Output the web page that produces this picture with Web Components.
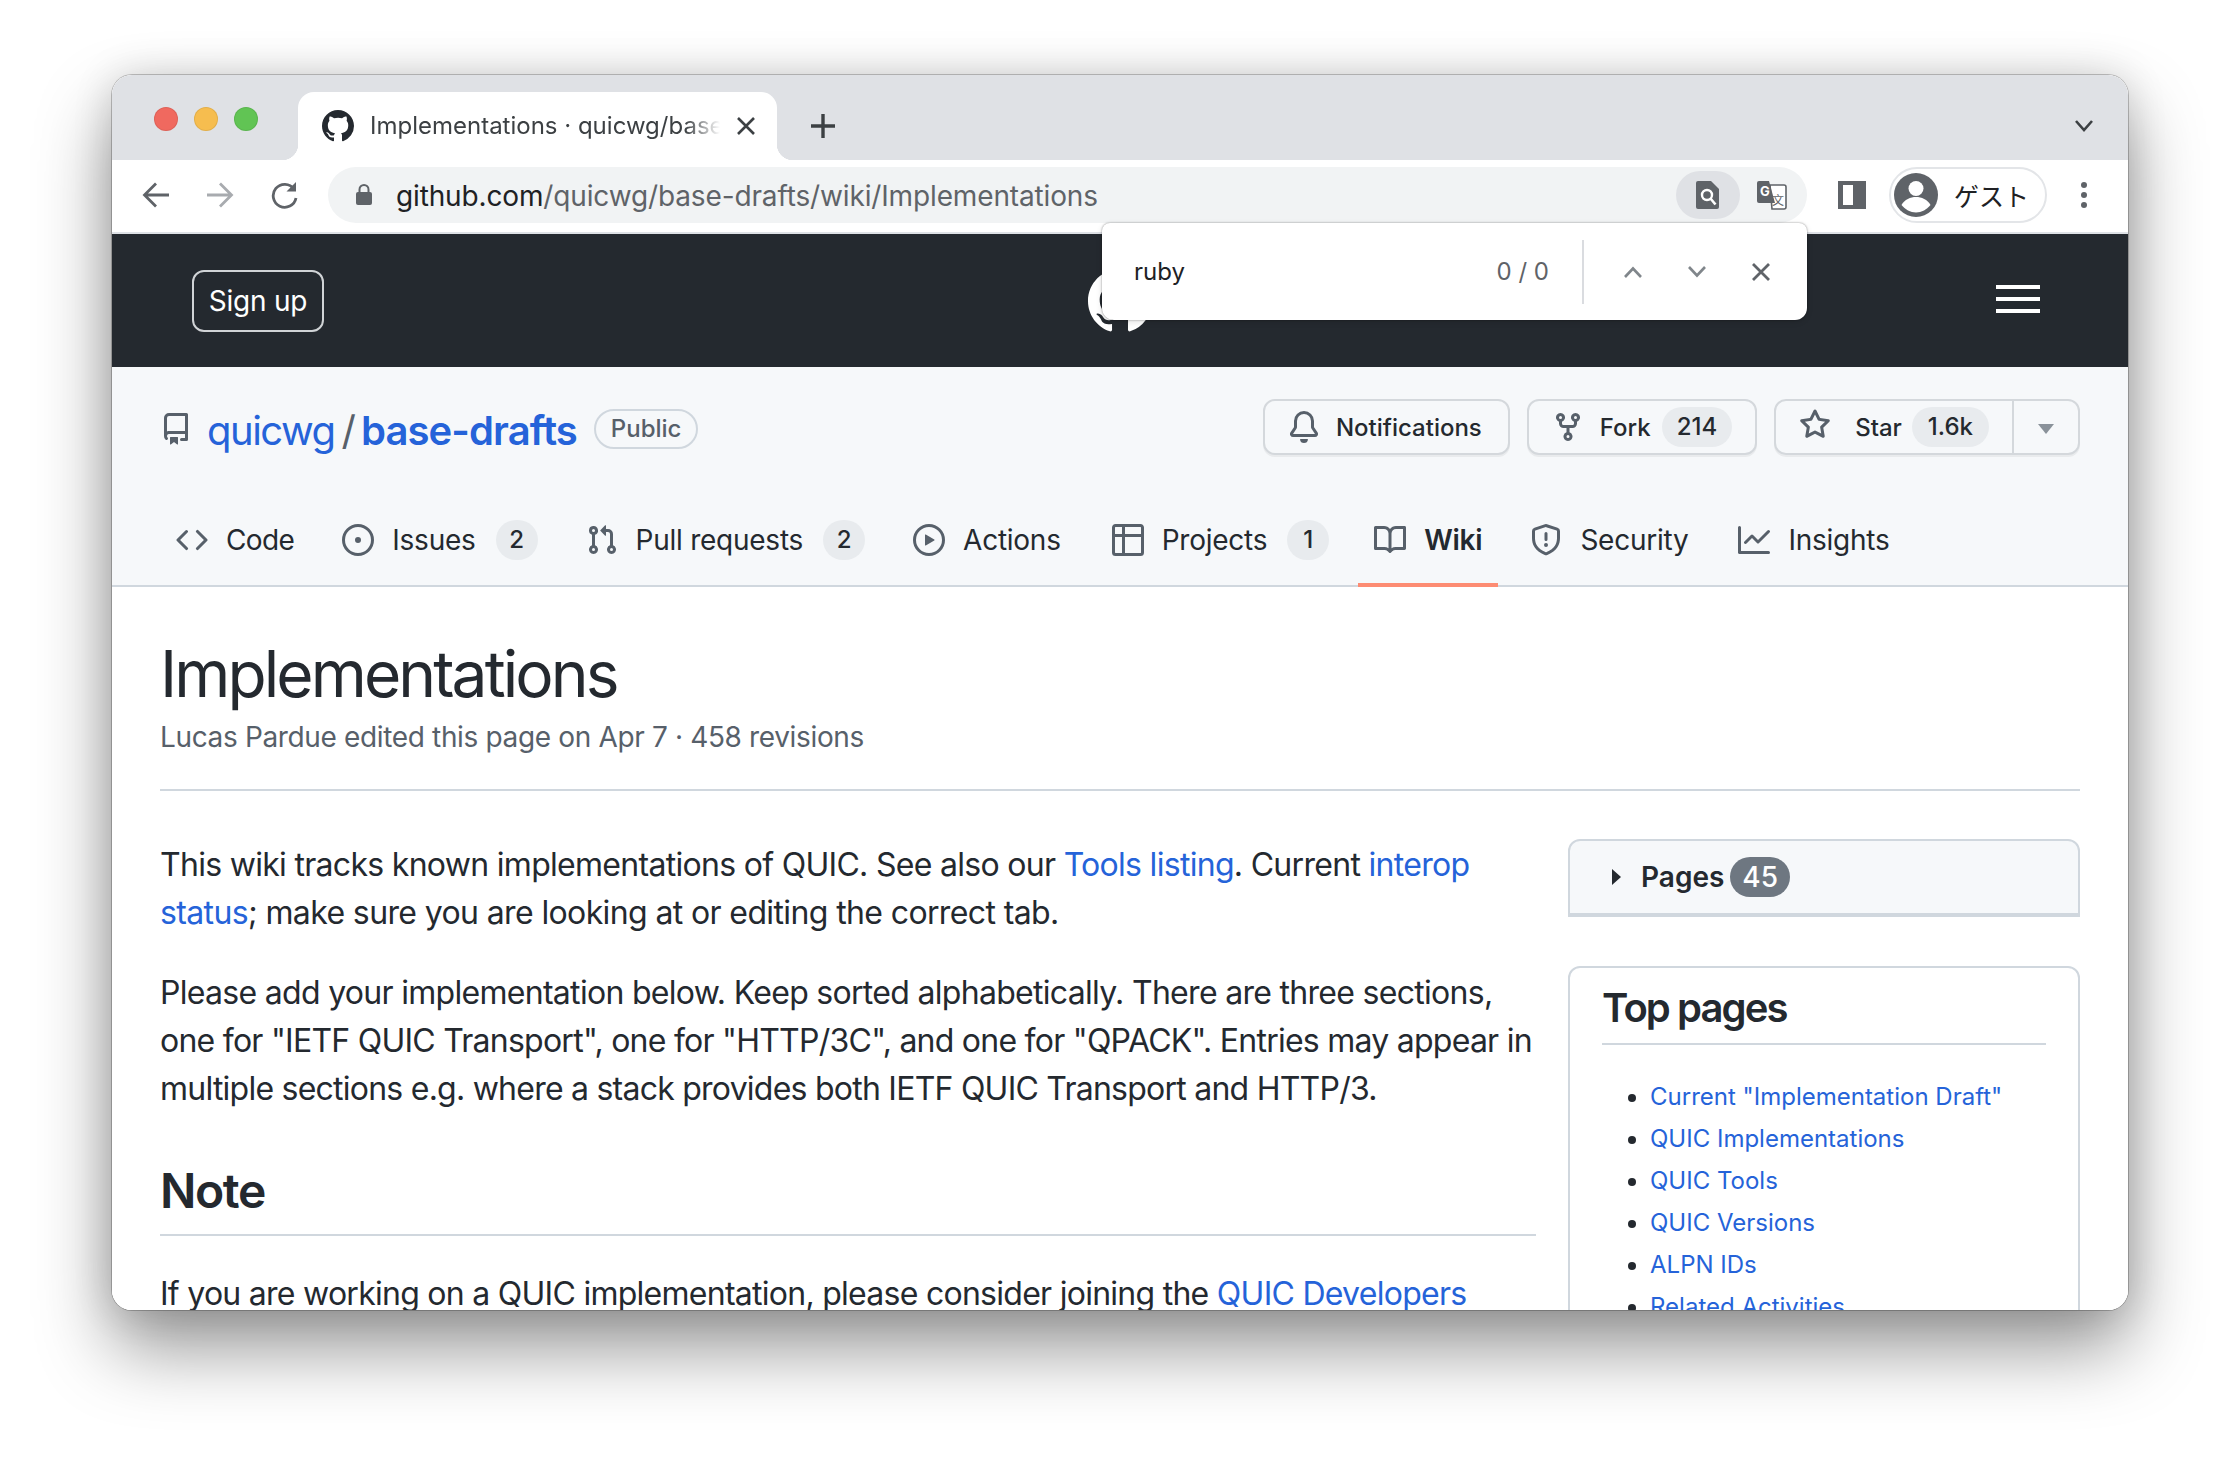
<!DOCTYPE html>
<html lang="en">
<head>
<meta charset="utf-8">
<title>Implementations · quicwg/base-drafts Wiki</title>
<style>
  html, body { margin: 0; background: #fff; }
  body { padding: 75px 112px 0; height: 1383px; overflow: hidden; font-family: Inter, "Noto Sans CJK JP", sans-serif; color: #24292f; }
  a { color: inherit; text-decoration: none; }
</style>
</head>
<body>
<browser-window>
  <tab-strip slot="chrome"></tab-strip>
  <browser-toolbar slot="chrome"></browser-toolbar>
  <find-bar slot="overlay" query="ruby" count="0 / 0"></find-bar>
  <site-header></site-header>
  <repo-head>
    <repo-title slot="title"></repo-title>
    <gh-button slot="actions" icon="bell">Notifications</gh-button>
    <gh-button slot="actions" icon="fork" count="214">Fork</gh-button>
    <gh-button slot="actions" icon="star" count="1.6k" caret>Star</gh-button>
    <nav-item slot="nav" icon="code" style="letter-spacing:-.6px">Code</nav-item>
    <nav-item slot="nav" icon="issue" count="2">Issues</nav-item>
    <nav-item slot="nav" icon="pr" count="2">Pull requests</nav-item>
    <nav-item slot="nav" icon="play" style="margin-right:3px">Actions</nav-item>
    <nav-item slot="nav" icon="table" count="1" style="margin-right:-3px">Projects</nav-item>
    <nav-item slot="nav" icon="book" active>Wiki</nav-item>
    <nav-item slot="nav" icon="shield">Security</nav-item>
    <nav-item slot="nav" icon="graph" style="margin-left:2px">Insights</nav-item>
  </repo-head>
  <wiki-page>
    <span slot="title">Implementations</span>
    <span slot="meta">Lucas Pardue edited this page on Apr 7 · 458 revisions</span>
    <wiki-body slot="body"></wiki-body>
    <pages-box slot="side" count="45"></pages-box>
    <top-pages slot="side"></top-pages>
  </wiki-page>
</browser-window>

<script>
const ICONS = {
  repo: 'M2 2.5A2.5 2.5 0 014.5 0h8.75a.75.75 0 01.75.75v12.5a.75.75 0 01-.75.75h-2.5a.75.75 0 110-1.5h1.75v-2h-8a1 1 0 00-.714 1.7.75.75 0 01-1.072 1.05A2.495 2.495 0 012 11.5v-9zm10.5-1V9h-8c-.356 0-.694.074-1 .208V2.5a1 1 0 011-1h8zM5 12.25v3.25a.25.25 0 00.4.2l1.45-1.087a.25.25 0 01.3 0L8.6 15.7a.25.25 0 00.4-.2v-3.25a.25.25 0 00-.25-.25h-3.5a.25.25 0 00-.25.25z',
  bell: 'M8 16a2 2 0 001.985-1.75c.017-.137-.097-.25-.235-.25h-3.5c-.138 0-.252.113-.235.25A2 2 0 008 16z M3 5a5 5 0 0110 0v2.947c0 .05.015.098.042.139l1.703 2.555A1.518 1.518 0 0113.482 13H2.518a1.518 1.518 0 01-1.263-2.36l1.703-2.554A.25.25 0 003 7.947V5zm5-3.5A3.5 3.5 0 004.5 5v2.947c0 .346-.102.683-.294.97l-1.703 2.556a.018.018 0 00-.003.01.015.015 0 00.005.012.017.017 0 00.006.004l.007.001h10.964l.007-.001a.017.017 0 00.006-.004.015.015 0 00.004-.012.017.017 0 00-.003-.01l-1.703-2.554a1.75 1.75 0 01-.294-.97V5A3.5 3.5 0 008 1.5z',
  fork: 'M5 3.25a.75.75 0 11-1.5 0 .75.75 0 011.5 0zm0 2.122a2.25 2.25 0 10-1.5 0v.878A2.25 2.25 0 005.75 8.5h1.5v2.128a2.251 2.251 0 101.5 0V8.5h1.5a2.25 2.25 0 002.25-2.25v-.878a2.25 2.25 0 10-1.5 0v.878a.75.75 0 01-.75.75h-4.5A.75.75 0 015 6.25v-.878zm3.75 7.378a.75.75 0 11-1.5 0 .75.75 0 011.5 0zm3-8.75a.75.75 0 100-1.5.75.75 0 000 1.5z',
  star: 'M8 .25a.75.75 0 01.673.418l1.882 3.815 4.21.612a.75.75 0 01.416 1.279l-3.046 2.97.719 4.192a.75.75 0 01-1.088.791L8 12.347l-3.766 1.98a.75.75 0 01-1.088-.79l.72-4.194L.818 6.374a.75.75 0 01.416-1.28l4.21-.611L7.327.668A.75.75 0 018 .25zm0 2.445L6.615 5.5a.75.75 0 01-.564.41l-3.097.45 2.24 2.184a.75.75 0 01.216.664l-.528 3.084 2.769-1.456a.75.75 0 01.698 0l2.77 1.456-.53-3.084a.75.75 0 01.216-.664l2.24-2.183-3.096-.45a.75.75 0 01-.564-.41L8 2.694v.001z',
  code: 'M4.72 3.22a.75.75 0 011.06 1.06L2.06 8l3.72 3.72a.75.75 0 11-1.06 1.06L.47 8.53a.75.75 0 010-1.06l4.25-4.25zm6.56 0a.75.75 0 10-1.06 1.06L13.94 8l-3.72 3.72a.75.75 0 101.06 1.06l4.25-4.25a.75.75 0 000-1.06l-4.25-4.25z',
  issue: 'M8 9.5a1.5 1.5 0 100-3 1.5 1.5 0 000 3z M8 0a8 8 0 100 16A8 8 0 008 0zM1.5 8a6.5 6.5 0 1113 0 6.5 6.5 0 01-13 0z',
  pr: 'M7.177 3.073L9.573.677A.25.25 0 0110 .854v4.792a.25.25 0 01-.427.177L7.177 3.427a.25.25 0 010-.354zM3.75 2.5a.75.75 0 100 1.5.75.75 0 000-1.5zm-2.25.75a2.25 2.25 0 113 2.122v5.256a2.251 2.251 0 11-1.5 0V5.372A2.25 2.25 0 011.5 3.25zM11 2.5h-1V4h1a1 1 0 011 1v5.628a2.251 2.251 0 101.5 0V5A2.5 2.5 0 0011 2.5zm1 10.25a.75.75 0 111.5 0 .75.75 0 01-1.5 0zM3.75 12a.75.75 0 100 1.5.75.75 0 000-1.5z',
  play: 'M1.5 8a6.5 6.5 0 1113 0 6.5 6.5 0 01-13 0zM8 0a8 8 0 100 16A8 8 0 008 0zM6.379 5.227A.25.25 0 006 5.442v5.117a.25.25 0 00.379.214l4.264-2.559a.25.25 0 000-.428L6.379 5.227z',
  table: 'M0 1.75C0 .784.784 0 1.75 0h12.5C15.216 0 16 .784 16 1.75v12.5A1.75 1.75 0 0114.25 16H1.75A1.75 1.75 0 010 14.25V1.75zM1.5 6.5v7.75c0 .138.112.25.25.25H5v-8H1.5zM5 5H1.5V1.75a.25.25 0 01.25-.25H5V5zm1.5 1.5v8h7.75a.25.25 0 00.25-.25V6.5h-8zm8-1.5h-8V1.5h7.75a.25.25 0 01.25.25V5z',
  book: 'M0 1.75A.75.75 0 01.75 1h4.253c1.227 0 2.317.59 3 1.501A3.744 3.744 0 0111.006 1h4.245a.75.75 0 01.75.75v10.5a.75.75 0 01-.75.75h-4.507a2.25 2.25 0 00-1.591.659l-.622.621a.75.75 0 01-1.06 0l-.622-.621A2.25 2.25 0 005.258 13H.75a.75.75 0 01-.75-.75V1.75zm8.755 3a2.25 2.25 0 012.25-2.25H14.5v9h-3.757c-.71 0-1.4.201-1.992.572l.004-7.322zm-1.504 7.324l.004-5.073-.002-2.253A2.25 2.25 0 005.003 2.5H1.5v9h3.757a3.75 3.75 0 011.994.574z',
  shield: 'M7.467.133a1.75 1.75 0 011.066 0l5.25 1.68A1.75 1.75 0 0115 3.48V7c0 1.566-.32 3.182-1.303 4.682-.983 1.498-2.585 2.813-5.032 3.855a1.7 1.7 0 01-1.33 0c-2.447-1.042-4.049-2.357-5.032-3.855C1.32 10.182 1 8.566 1 7V3.48a1.75 1.75 0 011.217-1.667l5.25-1.68zm.61 1.429a.25.25 0 00-.153 0l-5.25 1.68a.25.25 0 00-.174.238V7c0 1.358.275 2.666 1.057 3.86.784 1.194 2.121 2.34 4.366 3.297a.2.2 0 00.154 0c2.245-.956 3.582-2.104 4.366-3.298C13.225 9.666 13.5 8.36 13.5 7V3.48a.25.25 0 00-.174-.237l-5.25-1.68zM9 10.5a1 1 0 11-2 0 1 1 0 012 0zm-.25-5.75a.75.75 0 10-1.5 0v3a.75.75 0 001.5 0v-3z',
  graph: 'M1.5 1.75a.75.75 0 00-1.5 0v12.5c0 .414.336.75.75.75h14.5a.75.75 0 000-1.5H1.5V1.75zm14.28 2.53a.75.75 0 00-1.06-1.06L10 7.94 7.53 5.47a.75.75 0 00-1.06 0L3.22 8.72a.75.75 0 001.06 1.06L7 7.06l2.47 2.47a.75.75 0 001.06 0l5.25-5.25z',
  mark: 'M8 0C3.58 0 0 3.58 0 8c0 3.54 2.29 6.53 5.47 7.59.4.07.55-.17.55-.38 0-.19-.01-.82-.01-1.49-2.01.37-2.53-.49-2.69-.94-.09-.23-.48-.94-.82-1.13-.28-.15-.68-.52-.01-.53.63-.01 1.08.58 1.23.82.72 1.21 1.87.87 2.33.66.07-.52.28-.87.51-1.07-1.78-.2-3.64-.89-3.64-3.95 0-.87.31-1.59.82-2.15-.08-.2-.36-1.02.08-2.12 0 0 .67-.21 2.2.82.64-.18 1.32-.27 2-.27.68 0 1.36.09 2 .27 1.53-1.04 2.2-.82 2.2-.82.44 1.1.16 1.92.08 2.12.51.56.82 1.27.82 2.15 0 3.07-1.87 3.75-3.65 3.95.29.25.54.73.54 1.48 0 1.07-.01 1.93-.01 2.2 0 .21.15.46.55.38A8.013 8.013 0 0016 8c0-4.42-3.58-8-8-8z'
};

const svg = (name, size = 32, color = 'currentColor') =>
  `<svg width="${size}" height="${size}" viewBox="0 0 16 16" fill="${color}" style="display:block;flex:none"><path fill-rule="evenodd" d="${ICONS[name]}"/></svg>`;

// every element here is the same thing: open shadow root, html from render()
class ShadowElement extends HTMLElement {
  constructor() {
    super();
    this.attachShadow({mode: 'open'});
  }
  connectedCallback() {
    this.shadowRoot.innerHTML = this.render();
  }
}

class BrowserWindow extends ShadowElement {
  render() {
    return `<style>
      :host { display: block; position: relative; width: 2016px; height: 1235px; border-radius: 20px;
        box-shadow: 0 0 0 1px rgba(0,0,0,.22), 0 38px 74px rgba(0,0,0,.42), 0 0 40px rgba(0,0,0,.14); }
      .clip { height: 100%; border-radius: 20px; overflow: hidden; background: #fff; }
    </style>
    <div class="clip"><slot name="chrome"></slot><slot></slot></div>
    <slot name="overlay"></slot>`;
  }
}

class TabStrip extends ShadowElement {
  render() {
    return `<style>
      :host { display: flex; height: 85px; background: #dfe1e5; padding-left: 42px; box-sizing: border-box; }
      .lights { display: flex; gap: 16px; margin-top: 32px; }
      .lights i { width: 24px; height: 24px; border-radius: 50%; box-shadow: inset 0 0 0 1px rgba(0,0,0,.08); }
      .tab { position: relative; display: flex; align-items: center; width: 479px; height: 68px; margin: 17px 0 0 40px;
        background: #fff; border-radius: 16px 16px 0 0; padding-left: 24px; box-sizing: border-box; color: #1f2023; }
      .tab::before, .tab::after { content: ""; position: absolute; bottom: 0; width: 16px; height: 16px; }
      .tab::before { left: -16px; background: radial-gradient(circle at 0 0, transparent 16px, #fff 16.5px); }
      .tab::after { right: -16px; background: radial-gradient(circle at 100% 0, transparent 16px, #fff 16.5px); }
      .title { width: 350px; margin-left: 16px; font: 400 24px/32px Inter, sans-serif; white-space: nowrap; overflow: hidden; color: #3c4043;
        -webkit-mask-image: linear-gradient(90deg, #000 90%, transparent); mask-image: linear-gradient(90deg, #000 90%, transparent); }
      .close { margin-left: 16px; }
      .plus { margin: 38px 0 0 33px; }
      .more { margin: 44px 0 0 auto; margin-right: 34px; }
    </style>
    <div class="lights"><i style="background:#f0695f"></i><i style="background:#f6bd4f"></i><i style="background:#61c454"></i></div>
    <div class="tab">
      ${svg('mark', 32, '#24292f')}
      <span class="title">Implementations · quicwg/base-drafts Wiki</span>
      <svg class="close" width="20" height="20" viewBox="0 0 20 20" stroke="#3c4043" stroke-width="2.6"><path d="M2 2l16 16M18 2L2 18"/></svg>
    </div>
    <svg class="plus" width="26" height="26" viewBox="0 0 26 26" stroke="#3c4043" stroke-width="3.4"><path d="M13 1v24M1 13h24"/></svg>
    <svg class="more" width="20" height="14" viewBox="0 0 20 14" fill="none" stroke="#3c4043" stroke-width="2.6"><path d="M2 2l8 9 8-9"/></svg>`;
  }
}

class BrowserToolbar extends ShadowElement {
  render() {
    return `<style>
      :host { display: flex; align-items: center; height: 74px; padding: 0 12px 2px; box-sizing: border-box; background: #fff; border-bottom: 2px solid #dee1e6; }
      .btn { display: flex; align-items: center; justify-content: center; width: 64px; height: 48px; flex: none; }
      .omni { display: flex; align-items: center; width: 1479px; height: 56px; margin-left: 12px; padding: 0 3px 0 27px; box-sizing: border-box;
        border-radius: 28px; background: #f1f3f4; flex: none; }
      .url { flex: 1; margin-left: 23px; padding-top: 2px; font: 400 28px/36px Inter, sans-serif; letter-spacing: -.14px; color: #5f6368; white-space: nowrap; }
      .url b { font-weight: 400; color: #202124; }
      .lens { background: #dfe1e5; border-radius: 24px; }
      .panel { margin-left: 13px; }
      .profile { display: flex; align-items: center; gap: 16px; width: 158px; height: 56px; margin-left: 5px; padding-left: 3px; box-sizing: border-box;
        border: 2px solid #e3e5e8; border-radius: 28px; font: 400 25px/32px "Noto Sans CJK JP", sans-serif; color: #202124; flex: none; }
      .menu { margin-left: 5px; }
    </style>
    <div class="btn"><svg width="28" height="26" viewBox="0 0 28 26" fill="none" stroke="#5f6368" stroke-width="2.8"><path d="M27 13H3M14 1.5L2.5 13 14 24.5"/></svg></div>
    <div class="btn"><svg width="28" height="26" viewBox="0 0 28 26" fill="none" stroke="#a8abaf" stroke-width="2.8"><path d="M1 13h24M14 1.5L25.5 13 14 24.5"/></svg></div>
    <div class="btn"><svg width="28" height="28" viewBox="0 0 28 28" fill="none" stroke="#5f6368" stroke-width="2.8"><path d="M24 8a11.5 11.5 0 1 0 2 9"/><path d="M26 1v9.5h-9.5" fill="#5f6368" stroke="none"/></svg></div>
    <div class="omni">
      <svg width="18" height="22" viewBox="0 0 18 22" fill="#5f6368"><rect x="1" y="8" width="16" height="13" rx="2"/><path d="M4.5 9V5.5a4.5 4.5 0 0 1 9 0V9" fill="none" stroke="#5f6368" stroke-width="2"/></svg>
      <div class="url"><b>github.com</b>/quicwg/base-drafts/wiki/Implementations</div>
      <div class="btn lens"><svg width="24" height="28" viewBox="0 0 24 28"><path d="M2 0h13l8 8v18a2 2 0 0 1-2 2H2a2 2 0 0 1-2-2V2a2 2 0 0 1 2-2z" fill="#5f6368"/><circle cx="11" cy="14" r="5" fill="none" stroke="#fff" stroke-width="2.4"/><path d="M14.5 17.5l5 6" stroke="#fff" stroke-width="2.6"/></svg></div>
      <div class="btn"><svg width="30" height="30" viewBox="0 0 30 30"><path d="M13 5h14a2 2 0 0 1 2 2v20a2 2 0 0 1-2 2H15z" fill="#fff" stroke="#5f6368" stroke-width="1.6"/><path d="M2 1h10l6 22H2a2 2 0 0 1-2-2V3a2 2 0 0 1 2-2z" fill="#5f6368"/><text x="3" y="16" font-family="Inter,sans-serif" font-size="13" font-weight="700" fill="#fff">G</text><text x="15" y="25" font-family="'Noto Sans CJK SC',sans-serif" font-size="12" fill="#5f6368">文</text></svg></div>
    </div>
    <div class="btn panel"><svg width="28" height="28" viewBox="0 0 28 28"><path d="M0 0h28v28H0z M5 4v20h10V4z" fill="#5f6368" fill-rule="evenodd"/></svg></div>
    <div class="profile">
      <svg width="44" height="44" viewBox="0 0 44 44" style="flex:none"><circle cx="22" cy="22" r="22" fill="#5f6368"/><circle cx="22" cy="15.5" r="7.5" fill="#fff"/><path d="M7.5 32c3-5.5 9-8 14.5-8s11.5 2.5 14.5 8c-3.5 4.5-9 7.5-14.5 7.5S11 36.5 7.5 32z" fill="#fff"/></svg>
      <span>ゲスト</span>
    </div>
    <div class="btn menu"><svg width="6" height="26" viewBox="0 0 6 26" fill="#5f6368"><circle cx="3" cy="3" r="3"/><circle cx="3" cy="13" r="3"/><circle cx="3" cy="23" r="3"/></svg></div>`;
  }
}

class FindBar extends ShadowElement {
  render() {
    return `<style>
      :host { position: absolute; left: 990px; top: 148px; z-index: 2; display: flex; align-items: center; width: 705px; height: 97px; box-sizing: border-box;
        padding: 0 14px 0 32px; background: #fff; border-radius: 8px 8px 12px 12px; box-shadow: 0 0 2px rgba(0,0,0,.45), 0 2px 6px rgba(0,0,0,.12); }
      .q { flex: 1; font: 400 24px/32px Inter, sans-serif; color: #202124; }
      .n { font: 400 24px/32px Inter, sans-serif; color: #5f6368; margin-right: 33px; }
      .sep { width: 2px; height: 64px; background: #dadce0; }
      .b { display: flex; justify-content: center; width: 64px; }
    </style>
    <span class="q">${this.getAttribute('query')}</span>
    <span class="n">${this.getAttribute('count')}</span>
    <span class="sep"></span>
    <span class="b" style="margin-left:17px"><svg width="20" height="12" viewBox="0 0 20 12" fill="none" stroke="#80868b" stroke-width="2.6"><path d="M2 11l8-8.5 8 8.5"/></svg></span>
    <span class="b"><svg width="20" height="12" viewBox="0 0 20 12" fill="none" stroke="#80868b" stroke-width="2.6"><path d="M2 1l8 8.5 8-8.5"/></svg></span>
    <span class="b"><svg width="20" height="20" viewBox="0 0 20 20" fill="none" stroke="#5f6368" stroke-width="2.8"><path d="M2 2l16 16M18 2L2 18"/></svg></span>`;
  }
}

class SiteHeader extends ShadowElement {
  render() {
    return `<style>
      :host { display: grid; grid-template-columns: 1fr auto 1fr; align-items: center; height: 133px; padding: 0 80px; background: #24292f; color: #fff; }
      .signup { justify-self: start; display: flex; align-items: center; justify-content: center; width: 132px; height: 62px; box-sizing: border-box;
        border: 2px solid #d0d3d6; border-radius: 12px; font: 400 28px/36px Inter, sans-serif; letter-spacing: -.2px; }
      .burger { justify-self: end; display: flex; flex-direction: column; gap: 8px; margin: -3px 8px 0 0; }
      .burger i { display: block; width: 44px; height: 4px; background: #fff; }
    </style>
    <a class="signup">Sign up</a>
    ${svg('mark', 64)}
    <div class="burger"><i></i><i></i><i></i></div>`;
  }
}

class RepoHead extends ShadowElement {
  render() {
    return `<style>
      :host { display: block; height: 220px; padding-top: 32px; box-sizing: border-box; background: #f6f8fa; box-shadow: inset 0 -2px #d0d7de; }
      .top { display: flex; justify-content: space-between; height: 56px; padding: 0 48px; }
      .actions { display: flex; gap: 17px; }
      nav { display: flex; gap: 16px; height: 96px; margin-top: 36px; padding: 0 48px; }
    </style>
    <div class="top"><slot name="title"></slot><div class="actions"><slot name="actions"></slot></div></div>
    <nav><slot name="nav"></slot></nav>`;
  }
}

class RepoTitle extends ShadowElement {
  render() {
    return `<style>
      :host { display: flex; align-items: center; margin-top: 3px; font: 400 40px/50px Inter, sans-serif; color: #2563d9; }
      a, .sep { padding-top: 5px; }
      a { letter-spacing: -1.5px; }
      .sep { margin: 0 5px 0 7px; color: #57606a; }
      b { font-weight: 600; letter-spacing: -.9px; }
      .badge { margin-left: 17px; padding: 0 15px; height: 40px; box-sizing: border-box; border: 2px solid #d0d7de; border-radius: 20px;
        font: 500 24px/36px Inter, sans-serif; color: #57606a; }
      .ico { color: #57606a; margin-right: 15px; }
    </style>
    <span class="ico">${svg('repo')}</span>
    <a>quicwg</a><span class="sep">/</span><a><b>base-drafts</b></a>
    <span class="badge">Public</span>`;
  }
}

class GhButton extends ShadowElement {
  render() {
    const count = this.getAttribute('count');
    const caret = this.hasAttribute('caret');
    return `<style>
      :host { display: flex; height: 56px; box-sizing: border-box; background: #f6f8fa; border: 2px solid #d4d8dc; border-radius: 12px;
        box-shadow: 0 2px 0 rgba(27,31,36,.06); font: 500 24px/32px Inter, sans-serif; color: #24292f; }
      .main { display: flex; align-items: center; gap: ${caret ? 24 : 16}px; padding: 0 ${count ? 23 : 26}px 0 23px; }
      .ico { color: #57606a; ${caret ? 'margin-top: -4px;' : ''} }
      .label { padding-top: 2px; }
      .count { display: flex; align-items: center; height: 40px; margin: 0 0 0 ${caret ? -14 : -5}px; padding: 0 ${caret ? 16 : 15}px; border-radius: 20px; background: #e8ebee; }
      .caret { display: flex; align-items: center; justify-content: center; width: 64px; border-left: 2px solid #d4d8dc; }
    </style>
    <div class="main"><span class="ico">${svg(this.getAttribute('icon'))}</span><span class="label"><slot></slot></span>${count ? `<span class="count">${count}</span>` : ''}</div>
    ${caret ? `<div class="caret"><svg width="16" height="10" viewBox="0 0 16 10" fill="#8a929a" style="margin-top:4px"><path d="M0 0h16L8 10z"/></svg></div>` : ''}`;
  }
}

class NavItem extends ShadowElement {
  render() {
    const count = this.getAttribute('count');
    const active = this.hasAttribute('active');
    return `<style>
      :host { display: flex; align-items: center; gap: 18px; padding: 6px 16px 0; border-bottom: 4px solid ${active ? '#fd8c73' : 'transparent'};
        box-sizing: border-box; height: 96px; font: ${active ? 600 : 400} 28px/36px Inter, sans-serif; letter-spacing: -.25px; color: #24292f; }
      .ico { color: #57606a; }
      .count { display: flex; align-items: center; justify-content: center; min-width: 42px; height: 40px; margin-left: 2px; border-radius: 20px; background: #e8ebee; font-size: 24px; font-weight: 500; }
    </style>
    <span class="ico">${svg(this.getAttribute('icon'))}</span>
    <span><slot></slot></span>
    ${count ? `<span class="count">${count}</span>` : ''}`;
  }
}

class WikiPage extends ShadowElement {
  render() {
    return `<style>
      :host { display: block; padding: 47px 48px 0; background: #fff; }
      h1 { margin: 0 0 2px; font: 400 64px/80px Inter, sans-serif; letter-spacing: -2.9px; color: #24292f; }
      .meta { padding-bottom: 31px; font: 400 28px/42px Inter, sans-serif; letter-spacing: -.35px; color: #57606a; border-bottom: 2px solid #d0d7de; }
      .cols { display: grid; grid-template-columns: 1fr 512px; column-gap: 32px; margin-top: 48px; }
      .side { display: flex; flex-direction: column; gap: 49px; }
    </style>
    <h1><slot name="title"></slot></h1>
    <div class="meta"><slot name="meta"></slot></div>
    <div class="cols"><div><slot name="body"></slot></div><div class="side"><slot name="side"></slot></div></div>`;
  }
}

class WikiBody extends ShadowElement {
  render() {
    return `<style>
      :host { display: block; padding-top: 2px; font: 400 32px/48px Inter, sans-serif; letter-spacing: -.7px; color: #24292f; }
      p { margin: 0 0 32px; }
      .line { display: block; white-space: nowrap; }
      a { color: #2563d9; text-decoration: none; }
      h2 { margin: 48px 0 34px; padding-bottom: 13px; font: 600 48px/60px Inter, sans-serif; letter-spacing: -1.4px; border-bottom: 2px solid #d0d7de; }
    </style>
    <p>
      <span class="line" style="letter-spacing:-.7px">This wiki tracks known implementations of QUIC. See also our <a>Tools listing</a>. Current <a>interop</a></span>
      <span class="line" style="letter-spacing:-.62px"><a>status</a>; make sure you are looking at or editing the correct tab.</span>
    </p>
    <p>
      <span class="line">Please add your implementation below. Keep sorted alphabetically. There are three sections,</span>
      <span class="line" style="letter-spacing:-.75px">one for "IETF QUIC Transport", one for "HTTP/3C", and one for "QPACK". Entries may appear in</span>
      <span class="line" style="letter-spacing:-.76px">multiple sections e.g. where a stack provides both IETF QUIC Transport and HTTP/3.</span>
    </p>
    <h2>Note</h2>
    <p><span class="line" style="letter-spacing:-.73px">If you are working on a QUIC implementation, please consider joining the <a>QUIC Developers</a></span></p>`;
  }
}

class PagesBox extends ShadowElement {
  render() {
    return `<style>
      :host { display: flex; align-items: center; height: 78px; box-sizing: border-box; padding-left: 42px; background: #f6f8fa;
        border: 2px solid #d0d7de; border-bottom-width: 4px; border-radius: 12px 12px 0 0; font: 600 28px/36px Inter, sans-serif; color: #24292f; }
      .badge { display: flex; align-items: center; height: 40px; margin-left: 6px; padding: 0 12px; border-radius: 20px; background: #6e7781; color: #fff; font-weight: 500; }
      svg { margin-right: 20px; }
    </style>
    <svg width="9" height="16" viewBox="0 0 9 16" fill="#24292f"><path d="M0 0l9 8-9 8z"/></svg>
    <span>Pages</span><span class="badge">${this.getAttribute('count')}</span>`;
  }
}

class TopPages extends ShadowElement {
  render() {
    const links = ['Current "Implementation Draft"', 'QUIC Implementations', 'QUIC Tools', 'QUIC Versions', 'ALPN IDs', 'Related Activities'];
    return `<style>
      :host { display: block; height: 400px; box-sizing: border-box; padding: 15px 32px 0; border: 2px solid #d0d7de; border-radius: 12px; background: #fff; }
      h3 { margin: 0; padding-bottom: 10px; font: 600 40px/50px Inter, sans-serif; letter-spacing: -1.9px; color: #24292f; border-bottom: 2px solid #d0d7de; }
      ul { margin: 31px 0 0; padding: 0 0 0 48px; font: 400 24px/42px Inter, sans-serif; color: #24292f; }
      a { color: #2563d9; text-decoration: none; }
    </style>
    <h3>Top pages</h3>
    <ul>${links.map(l => `<li><a>${l}</a></li>`).join('')}</ul>`;
  }
}

customElements.define('browser-window', BrowserWindow);
customElements.define('tab-strip', TabStrip);
customElements.define('browser-toolbar', BrowserToolbar);
customElements.define('find-bar', FindBar);
customElements.define('site-header', SiteHeader);
customElements.define('repo-head', RepoHead);
customElements.define('repo-title', RepoTitle);
customElements.define('gh-button', GhButton);
customElements.define('nav-item', NavItem);
customElements.define('wiki-page', WikiPage);
customElements.define('wiki-body', WikiBody);
customElements.define('pages-box', PagesBox);
customElements.define('top-pages', TopPages);
</script>
</body>
</html>
